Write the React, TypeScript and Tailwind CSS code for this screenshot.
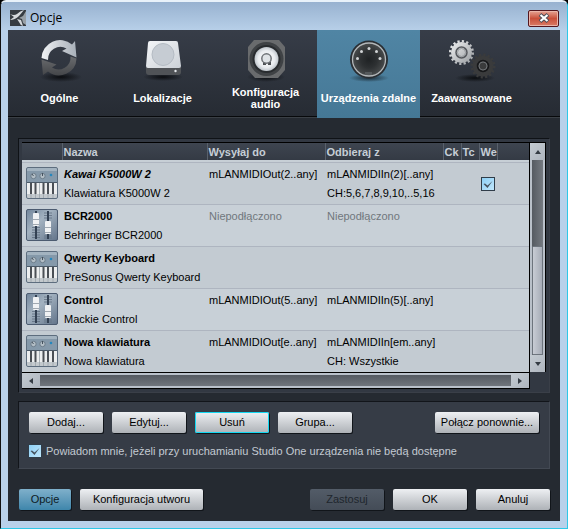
import React, { useId } from "react";

function CheckBox({ id, label }: { id: string; label?: string }) {
  return (
    <span className="relative inline-block size-[14px] shrink-0 align-top">
      <input
        id={id}
        type="checkbox"
        defaultChecked
        aria-label={label}
        className="peer block size-[14px] appearance-none border border-[#303d49] bg-linear-to-br from-[#8ed0f5] to-[#c0e6fb]"
      />
      <svg viewBox="0 0 14 14" className="pointer-events-none absolute inset-0 hidden size-[14px] peer-checked:block">
        <path d="M2.500 7 4 6.500 6.500 8.500 11.500 4 6.500 11Z" fill="#46525e" />
      </svg>
    </span>
  );
}

function RefreshIcon() {
  return (
    <svg viewBox="0 0 48 48" className="size-12">
      <defs>
        <linearGradient id="arcLight" x1="0" y1="0" x2="1" y2="0">
          <stop stopColor="#f1f3f5" />
          <stop offset=".6" stopColor="#c3c8ce" />
          <stop offset="1" stopColor="#a9b1ba" />
        </linearGradient>
        <linearGradient id="arcDark" x1="0" y1="0" x2="0" y2="1">
          <stop stopColor="#6a6c6f" />
          <stop offset="1" stopColor="#444649" />
        </linearGradient>
        <radialGradient id="shadow">
          <stop stopColor="#0b0d10" />
          <stop offset="1" stopColor="#0b0d10" stopOpacity="0" />
        </radialGradient>
      </defs>
      <ellipse cx="25" cy="41" rx="21" ry="5" fill="url(#shadow)" />
      <path d="M5.500 22A18.500 18.500 0 0 1 36 8.500L39 5 40.500 21.500 26 15 30.500 12.500A12.500 12.500 0 0 0 12 24Z" fill="url(#arcLight)" />
      <path d="M40.500 22.500A17.500 17.500 0 0 1 12 35.500L7 39 5.500 23.500 20.500 28.500 16 31.500A12 12 0 0 0 34.500 20.500Z" fill="url(#arcDark)" />
    </svg>
  );
}

function DriveIcon() {
  return (
    <svg viewBox="0 0 48 48" className="size-12">
      <defs>
        <linearGradient id="driveTop" x1="0" y1="0" x2="1" y2="1">
          <stop stopColor="#f4f6f8" />
          <stop offset="1" stopColor="#ccd1d7" />
        </linearGradient>
      </defs>
      <ellipse cx="24" cy="41" rx="20" ry="4" fill="url(#shadow)" />
      <path d="M7 31h35v5q0 3-3 3H10q-3 0-3-3Z" fill="#505357" />
      <path d="M11 5h26q2 0 2 2l3 23q0 2-2 2H9q-2 0-2-2L9 7q0-2 2-2Z" fill="url(#driveTop)" />
      <circle cx="24" cy="18.500" r="11" fill="#c6ccd3" stroke="#b4bbc3" />
      <circle cx="36.500" cy="35" r="1.200" fill="#e5e8ec" />
    </svg>
  );
}

function ConnectorIcon() {
  return (
    <svg viewBox="0 0 48 48" className="size-12">
      <defs>
        <radialGradient id="ring">
          <stop stopColor="#fff" />
          <stop offset=".7" stopColor="#e9ecef" />
          <stop offset="1" stopColor="#c0c6cc" />
        </radialGradient>
      </defs>
      <ellipse cx="24" cy="41" rx="19" ry="5" fill="url(#shadow)" />
      <path d="M12 4h25l6 7v23l-7 8H13l-7-8V11Z" fill="#696b6d" />
      <circle cx="24.500" cy="23" r="17" fill="#3f4245" />
      <circle cx="24.500" cy="23" r="14" fill="#292c2f" />
      <circle cx="24.500" cy="23" r="12" fill="url(#ring)" />
      <path d="M21 26v3h3v-2h2v2h3v-3" fill="#4b4e52" />
      <circle cx="24.500" cy="22.500" r="4.700" fill="#dfe3e6" stroke="#6e7276" strokeWidth="1.500" />
    </svg>
  );
}

function MidiIcon() {
  return (
    <svg viewBox="0 0 48 48" className="size-12">
      <defs>
        <radialGradient id="midi">
          <stop stopColor="#1f2224" />
          <stop offset=".5" stopColor="#2d3032" />
          <stop offset="1" stopColor="#484b4c" />
        </radialGradient>
      </defs>
      <ellipse cx="24" cy="42" rx="20" ry="4" fill="url(#shadow)" opacity=".7" />
      <circle cx="24" cy="23.500" r="19" fill="#292e33" />
      <circle cx="24" cy="23.500" r="16.500" fill="url(#midi)" stroke="#b3b7b9" strokeWidth="1.300" />
      <g fill="#d1d4d6">
        <circle cx="12.500" cy="22.500" r="1.500" />
        <circle cx="16.500" cy="15.500" r="1.500" />
        <circle cx="24" cy="12.500" r="1.500" />
        <circle cx="31.500" cy="15.500" r="1.500" />
        <circle cx="35" cy="22.500" r="1.500" />
      </g>
      <path d="M20 36h7v3h-7Z" fill="#55595b" />
    </svg>
  );
}

function Gear({ cx, cy, fill, inner }: { cx: number; cy: number; fill: string; inner: string }) {
  return (
    <g>
      <circle cx={cx} cy={cy} r="10.500" fill={fill} />
      <circle cx={cx} cy={cy} r="11.200" fill="none" stroke={fill} strokeWidth="2.600" strokeDasharray="2.200 2.198" />
      <circle cx={cx} cy={cy} r="5.500" fill="none" stroke={inner} strokeWidth="1.500" />
      <circle cx={cx} cy={cy} r="4" fill="none" stroke="#84888c" strokeWidth=".7" />
    </g>
  );
}

function GearsIcon() {
  return (
    <svg viewBox="0 0 48 48" className="size-12 overflow-visible">
      <defs>
        <linearGradient id="gearLight" x1="0" y1="0" x2="1" y2="1">
          <stop stopColor="#eff0f1" />
          <stop offset="1" stopColor="#9a9ea2" />
        </linearGradient>
      </defs>
      <ellipse cx="27" cy="42" rx="20" ry="4" fill="url(#shadow)" />
      <Gear cx={13.5} cy={16.5} fill="url(#gearLight)" inner="#55585d" />
      <Gear cx={35} cy={30} fill="#3a3b3c" inner="#17181a" />
    </svg>
  );
}

const tabs = [
  { label: "Ogólne", icon: <RefreshIcon /> },
  { label: "Lokalizacje", icon: <DriveIcon /> },
  { label: "Konfiguracja audio", icon: <ConnectorIcon />, wrap: true },
  { label: "Urządzenia zdalne", icon: <MidiIcon />, active: true },
  { label: "Zaawansowane", icon: <GearsIcon /> },
];

function KeyboardIcon() {
  return (
    <svg viewBox="0 0 32 32" className="block size-8">
      <path d="M1 1h30v14H1Z" fill="#8599aa" />
      <path d="M1 1h30v3H1Z" fill="#a3b3c0" />
      <circle cx="7.500" cy="9" r="2.700" fill="#b3bec6" stroke="#6d7d8b" />
      <circle cx="16.500" cy="9" r="2.700" fill="#b3bec6" stroke="#6d7d8b" />
      <path d="M7.500 9 6 7M16.500 9V6" stroke="#46535f" />
      <circle cx="25" cy="8" r="1.300" fill="#2687bd" />
      <path d="M1 15h30v1H1Z" fill="#4b5967" />
      <path d="M1 16h30v14H1Z" fill="#eceeef" />
      <path d="M1 27h30v4H1Z" fill="#c3c9cd" />
      <path d="M5 26v5M9.500 26v5M13.500 16v15M17.500 26v5M22 26v5M27 26v5" stroke="#9ba3aa" strokeWidth=".8" />
      <path d="M4 16h2v11H4ZM8.500 16h2v11h-2ZM16.500 16h2v11h-2ZM21 16h2v11h-2ZM26 16h2v11h-2Z" fill="#4a4f55" />
      <rect x=".5" y=".5" width="31" height="31" rx="1.500" fill="none" stroke="#5d6d7e" />
    </svg>
  );
}

function FaderIcon() {
  return (
    <svg viewBox="0 0 32 32" className="block size-8">
      <defs>
        <linearGradient id="faderPanel" x1="0" y1="0" x2="1" y2="1">
          <stop stopColor="#71859b" />
          <stop offset=".4" stopColor="#a3b2c0" />
          <stop offset="1" stopColor="#62748a" />
        </linearGradient>
      </defs>
      <rect x=".5" y=".5" width="31" height="31" rx="1.500" fill="url(#faderPanel)" stroke="#4c5b70" />
      <path d="M6 18.500h8M6 21h8M6 23.500h8M6 26h8M6 28.500h8M18 4h8M18 6.500h8M18 9h8M18 27h8M18 29h8" stroke="#5f6e80" strokeWidth=".8" />
      <path d="M10 2v28M22 2v28" stroke="#334153" strokeWidth="2" />
      <rect x="7" y="4" width="6" height="13" rx="1" fill="#f0f2f4" />
      <path d="M7 10.500h6M7 15.500h6" stroke="#a0a8b0" />
      <rect x="19" y="12" width="6" height="13" rx="1" fill="#f0f2f4" />
      <path d="M19 18.500h6M19 23.500h6" stroke="#a0a8b0" />
    </svg>
  );
}

const devices = [
  { kind: "keys", name: "Kawai K5000W 2", model: "Klawiatura K5000W 2", send: "mLANMIDIOut(2..any]", receive: "mLANMIDIIn(2)[..any]", channels: "CH:5,6,7,8,9,10,..5,16", italic: true, clock: true },
  { kind: "fader", name: "BCR2000", model: "Behringer BCR2000", send: "Niepodłączono", receive: "Niepodłączono", offline: true },
  { kind: "keys", name: "Qwerty Keyboard", model: "PreSonus Qwerty Keyboard" },
  { kind: "fader", name: "Control", model: "Mackie Control", send: "mLANMIDIOut(5..any]", receive: "mLANMIDIIn(5)[..any]" },
  { kind: "keys", name: "Nowa klawiatura", model: "Nowa klawiatura", send: "mLANMIDIOut[e..any]", receive: "mLANMIDIIn[em..any]", channels: "CH: Wszystkie" },
];

const headings = ["", "Nazwa", "Wysyłaj do", "Odbieraj z", "Ck", "Tc", "We", ""];

function DeviceTable() {
  return (
    <table className="h-full w-full table-fixed border-collapse bg-[#c7cfd6] text-left text-[11px] text-black">
      <colgroup>
        <col className="w-10" />
        <col className="w-[145px]" />
        <col className="w-[118px]" />
        <col className="w-[118px]" />
        <col className="w-[18px]" />
        <col className="w-[18px]" />
        <col className="w-[18px]" />
        <col />
      </colgroup>
      <thead>
        <tr className="h-[17px] bg-linear-to-b from-[#3e4550] to-[#343a44] leading-4 text-[#c6ced6]">
          {headings.map((h, i) => (
            <th key={i} className={`overflow-visible whitespace-nowrap p-0 ${i ? "border-l border-[#59616c] pl-px" : ""}`}>
              {h}
            </th>
          ))}
        </tr>
        <tr className="h-[2px]">
          <td colSpan={8} className="p-0" />
        </tr>
      </thead>
      <tbody>
        {devices.map((d, i) => (
          <tr key={i} className={`h-[42px] border-t border-[#aeb5c0] align-top whitespace-nowrap leading-[19px] ${i % 2 ? "bg-[#c8d0d7]" : "bg-[#c3cbd2]"}`}>
            <td className="p-0 pt-1 pl-1">{d.kind === "keys" ? <KeyboardIcon /> : <FaderIcon />}</td>
            <td className="p-0 pt-0.5 pl-0.5">
              <div className={d.italic ? "font-bold italic" : "font-bold"}>{d.name}</div>
              <div>{d.model}</div>
            </td>
            <td className={`p-0 pt-0.5 pl-0.5 ${d.offline ? "text-[#70777d]" : ""}`}>{d.send}</td>
            <td className={`p-0 pt-0.5 pl-0.5 ${d.offline ? "text-[#70777d]" : ""}`}>
              <div>{d.receive}</div>
              <div>{d.channels}</div>
            </td>
            <td className="p-0" />
            <td className="p-0" />
            <td className="p-0 pt-3.5 pl-0.5">{d.clock && <CheckBox id="device-enabled" label="We" />}</td>
            <td className="p-0" />
          </tr>
        ))}
      </tbody>
    </table>
  );
}

function Arrow({ d, label, className }: { d: string; label: string; className: string }) {
  return (
    <button type="button" aria-label={label} className={`flex shrink-0 items-center justify-center bg-linear-to-br from-[#c4cbd2] to-[#aeb5be] ${className}`}>
      <svg viewBox="0 0 8 8" className="size-2">
        <path d={d} fill="#343b43" />
      </svg>
    </button>
  );
}

const tones = {
  light: "bg-linear-to-b from-[#eef0f3] to-[#aeb2b7] text-black",
  focused: "bg-linear-to-b from-[#eef0f3] to-[#aeb2b7] text-black ring-1 ring-inset ring-[#13d8f2]",
  blue: "bg-linear-to-b from-[#7fb0cb] to-[#3e86ab] text-[#0d1a24]",
  disabled: "bg-linear-to-b from-[#535c68] to-[#444c57] text-[#20262d]",
};

function Button({ children, width, tone = "light" }: { children: React.ReactNode; width: string; tone?: keyof typeof tones }) {
  return (
    <button type="button" disabled={tone === "disabled"} className={`h-[21px] shrink-0 rounded-[2px] whitespace-nowrap text-[11px] shadow-[1px_1px_0_#11151a] ${width} ${tones[tone]}`}>
      {children}
    </button>
  );
}

export default function App() {
  const notifyId = useId();
  return (
    <div className="bg-black font-['Liberation_Sans',Arial,sans-serif]">
      <div className="flex min-h-screen flex-col rounded-t-[6px] border border-t-2 border-[#2fc8e8] border-t-[#e9f2fa] border-l-[#111] bg-[#b9d1ea] px-[7px] pb-[7px]">
        <header className="-mx-[7px] flex h-7 items-center gap-1 rounded-t-[4px] bg-linear-to-b from-[#98b2d0] to-[#b7cfe8] pt-1 pr-2 pl-[9px]">
          <svg viewBox="0 0 16 16" className="size-4">
            <rect width="16" height="16" fill="#363c42" />
            <path d="M0 4q4 2 7 0 3-3 7-4L9 6Q5 10 0 10l4-3Z" fill="#d5d9dc" />
            <path d="m9 8 4-2 3-5v14l-3-2-1-4Z" fill="#98a0a6" />
            <path d="m7 9 4 1 2 6q-3-1-4-4Z" fill="#d5d9dc" />
          </svg>
          <h1 className="font-['Open_Sans','Noto_Sans',sans-serif] text-[12px] leading-4 text-black">Opcje</h1>
          <button type="button" aria-label="Zamknij" className="ml-auto flex h-[17px] w-[31px] items-center justify-center rounded-[2px] border border-[#54161e] bg-linear-to-b from-[#e5a394] via-[#c94f3a] via-50% to-[#d97b66] ring-1 ring-inset ring-[#eab4a8]">
            <svg viewBox="0 0 12 10" className="h-2.5 w-3">
              <path d="m2 1.500 8 7M10 1.500l-8 7" stroke="#4a4d58" strokeWidth="4" />
              <path d="m2.500 2 7 6M9.500 2l-7 6" stroke="#fff" strokeWidth="2.200" />
            </svg>
          </button>
        </header>

        <main className="flex flex-1 flex-col bg-[#252a31]">
          <nav className="flex h-[88px] bg-linear-to-b from-[#373d48] to-[#262b33] shadow-[inset_0_-1px_0_#3a3f45,inset_0_-2px_0_#07090b]">
            {tabs.map((t) => (
              <button key={t.label} type="button" className={`flex w-[103px] flex-col items-center pt-1.5 text-[11px] leading-3 font-bold text-white ${t.active ? "bg-linear-to-b from-[#5085a4] to-[#457896]" : ""}`}>
                {t.icon}
                <span className="flex h-7 items-center whitespace-nowrap">
                  <span className={t.wrap ? "w-20 whitespace-normal" : ""}>{t.label}</span>
                </span>
              </button>
            ))}
          </nav>

          <section className="mx-2.5 mt-5 border border-t-[#0f1216] border-r-[#3a3f48] border-b-[#3a3f48] border-l-[#0f1216] bg-[#323842] p-[3px]">
            <div className="flex border-t border-black">
              <div className="min-w-0 flex-1 border-r border-black">
                <DeviceTable />
              </div>
              <div className="flex w-4 flex-col border-r border-black bg-[#b9c0c9]">
                <Arrow label="W górę" d="m1 6 3-4 3 4Z" className="h-[17px]" />
                <div className="mx-auto flex w-[11px] flex-1 flex-col justify-end bg-linear-to-r from-[#555a61] to-[#747980]">
                  <div className="h-[109px] rounded-[1px] border border-[#6d747d] bg-linear-to-r from-[#c8ccd4] to-[#a6acb7]" />
                </div>
                <Arrow label="W dół" d="m1 2 3 4 3-4Z" className="h-[17px]" />
              </div>
            </div>
            <div className="mr-[16px] flex h-[17px] items-center border-y border-r border-black bg-[#bac1ca]">
              <Arrow label="W lewo" d="m6 1-4 3 4 3Z" className="h-[15px] w-[18px]" />
              <div className="h-[11px] flex-1 bg-linear-to-b from-[#555a61] to-[#70757c]" />
              <Arrow label="W prawo" d="m2 1 4 3-4 3Z" className="h-[15px] w-[18px]" />
            </div>
          </section>

          <section className="mx-2.5 mt-2 border border-t-[#12151a] border-r-[#434953] border-b-[#434953] border-l-[#12151a] bg-[#363c46] px-[9px] py-2.5">
            <div className="flex gap-[9px] px-px">
              <Button width="w-[74px]">Dodaj...</Button>
              <Button width="w-[74px]">Edytuj...</Button>
              <Button width="w-[74px]" tone="focused">Usuń</Button>
              <Button width="w-[74px]">Grupa...</Button>
              <span className="flex-1" />
              <Button width="w-[104px]">Połącz ponownie...</Button>
            </div>
            <div className="mt-[11px] flex items-center gap-1 text-[11px] leading-[14px] text-[#c3cad2]">
              <CheckBox id={notifyId} />
              <label htmlFor={notifyId} className="whitespace-nowrap">
                Powiadom mnie, jeżeli przy uruchamianiu Studio One urządzenia nie będą dostępne
              </label>
            </div>
          </section>

          <footer className="mx-2.5 mt-5 mb-2.5 flex gap-[9px] pl-px">
            <Button width="w-[52px]" tone="blue">Opcje</Button>
            <Button width="w-[123px]">Konfiguracja utworu</Button>
            <span className="flex-1" />
            <Button width="w-[74px]" tone="disabled">Zastosuj</Button>
            <Button width="w-[74px]">OK</Button>
            <Button width="w-[74px]">Anuluj</Button>
          </footer>
        </main>
      </div>
    </div>
  );
}
